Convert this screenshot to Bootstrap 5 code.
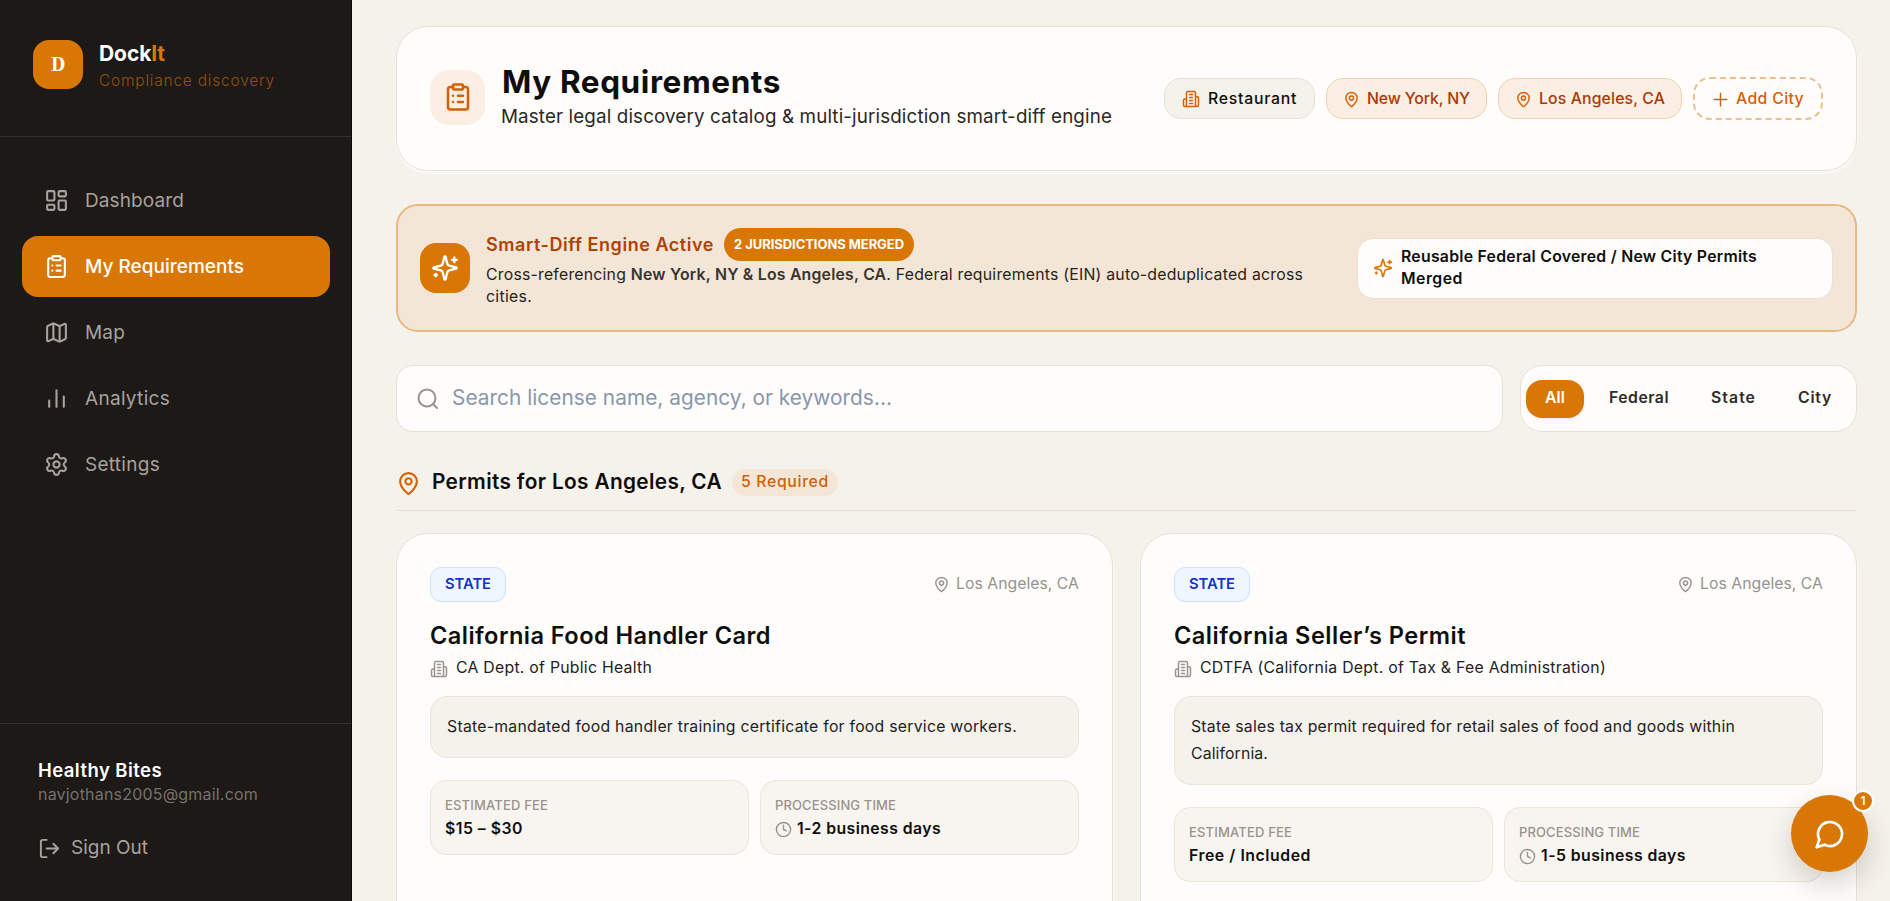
<!DOCTYPE html>
<html lang="en">
<head>
  <meta charset="UTF-8" />
  <meta name="viewport" content="width=device-width, initial-scale=1.0"/>
  <title>DockIt - My Requirements</title>
  <link href="https://cdn.jsdelivr.net/npm/bootstrap@5.3.0/dist/css/bootstrap.min.css" rel="stylesheet"/>
  <style>
    :root {
      --brand: #d97706;
      --brand-deep: #d45f04;
      --rust: #a83a06;
      --ink: #0f0e0d;
      --line: #e8e0d5;
      --paper: #fefdfc;
      --sand: #f5f2eb;
    }
    body { font-family: Inter, "Liberation Sans", sans-serif; background: var(--sand); color: var(--ink); line-height: 1.2; }
    svg { fill: none; stroke: currentColor; stroke-width: 2; stroke-linecap: round; stroke-linejoin: round; flex-shrink: 0; display: block; }
    [data-w] { white-space: nowrap; display: inline-block; }
    .shell { height: 100vh; }

    /* sidebar */
    .side { width: 352px; background: #1c1917; border-right: 1px solid #0c0a09; color: #a8a29e; }
    .brand-row { height: 137px; padding: 40px 0 0 33px; border-bottom: 1px solid #35312e; }
    .logo { width: 50px; height: 49px; border-radius: 16px; background: var(--brand); color: #fff; font-family: "DejaVu Serif Condensed", "DejaVu Serif", serif; font-weight: 700; font-size: 18px; }
    .brand-name { font-size: 21px; font-weight: 700; color: #fff; line-height: 26px; margin-top: 1px; }
    .brand-name b { color: var(--brand); font-weight: 700; }
    .brand-sub { font-size: 15.5px; font-weight: 300; color: #96500f; line-height: 28px; }
    .menu { padding: 33px 21px 0 22px; gap: 5px; }
    .menu a { height: 61px; border-radius: 16px; padding-left: 22px; gap: 16px; color: #a8a29e; font-size: 19px; text-decoration: none; }
    .menu a span { padding-top: 1px; }
    .menu a.on { background: var(--brand); color: #fff; font-weight: 500; }
    .who { height: 178px; border-top: 1px solid #35312e; padding: 33px 0 0 38px; }
    .who-name { font-size: 18.5px; font-weight: 600; color: #fff; line-height: 26px; }
    .who-mail { font-size: 16px; color: #78716c; line-height: 22px; }
    .signout { margin-top: 30px; gap: 10px; font-size: 19px; line-height: 26px; }

    /* main */
    .content { width: 1538px; padding: 26px 33px 0 44px; }
    .panel { background: var(--paper); border: 1px solid var(--line); border-radius: 32px; }
    .soft { box-shadow: 0 2px 3px rgba(255, 255, 255, .75); }
    .page-head { height: 145px; padding: 0 33px; }
    .head-icon { width: 55px; height: 55px; margin-bottom: 3px; border-radius: 19px; background: #fbeee2; color: var(--brand-deep); }
    .page-title { font-size: 31.5px; font-weight: 700; line-height: 36px; margin: 0 0 0 1px; }
    .page-sub { font-size: 18.8px; line-height: 26px; color: #2b2826; margin: 4px 0 3px; }
    .chip { height: 41px; border-radius: 17px; border: 1px solid var(--line); background: var(--sand); font-size: 15.8px; font-weight: 500; padding: 1px 17px 0; gap: 8px; }
    .chip svg { color: var(--brand-deep); }
    .chip-city { background: #fbeee2; border-color: #f2d2ae; color: var(--rust); padding: 1px 16px 0; gap: 7px; }
    .chip-add { height: 43px; background: transparent; border: 2px dashed #ecc08c; color: var(--brand-deep); gap: 7px; }

    .banner { margin-top: 33px; height: 128px; border: 2px solid #e9b985; border-radius: 22px; background: #f3e6d6; padding: 0 22px; }
    .banner-icon { width: 50px; height: 50px; border-radius: 16px; background: var(--brand); color: #fff; }
    .banner-title { font-size: 18px; font-weight: 600; color: #b04205; }
    .tag { height: 33px; border-radius: 17px; background: var(--brand); color: #fff; font-size: 13px; font-weight: 700; padding: 0 10px; }
    .banner-text { font-size: 15.8px; line-height: 22px; color: #262320; margin-top: 3px; }
    .banner-text b { font-weight: 600; color: #38342f; }
    .note { width: 476px; height: 61px; border-radius: 16px; background: var(--paper); border: 1px solid var(--line); font-size: 15.8px; font-weight: 600; line-height: 22px; padding: 0 15px; gap: 8px; }
    .note svg { color: var(--brand); }

    .tools { margin-top: 33px; gap: 17px; }
    .search { height: 67px; border-radius: 17px; padding-left: 19px; gap: 12px; color: #8b96a8; font-size: 20.8px; }
    .search svg { color: #9a938d; }
    .filters { width: 337px; height: 67px; border-radius: 22px; padding: 0 5px; font-size: 15.8px; font-weight: 600; color: #2f2b27; }
    .filters .all-on { height: 38px; width: 58px; border-radius: 16px; background: var(--brand); color: #fff; box-shadow: 0 2px 3px rgba(0, 0, 0, .05); }
    .filter-opts { padding-left: 25px; gap: 42px; }

    .section-head { height: 79px; padding-top: 24px; border-bottom: 1px solid var(--line); }
    .section-head svg { color: var(--brand-deep); }
    .section-title { font-size: 20.8px; font-weight: 600; margin: 0 10px 2px 11px; }
    .count { height: 27px; border-radius: 14px; background: #f3e6d6; color: var(--brand-deep); font-size: 15.8px; font-weight: 500; padding: 0 9px; margin-bottom: 2px; }

    .permits { margin-top: 22px; gap: 27px; }
    .permit { width: 717px; height: 460px; padding: 33px 33px 0; }
    .level { height: 35px; border-radius: 11px; border: 1px solid #cfe3fd; background: #eff6ff; color: #1733c8; font-size: 14.8px; font-weight: 600; padding: 0 14px; }
    .where { color: #99928d; font-size: 15.8px; gap: 6px; }
    .permit-title { font-size: 23.6px; font-weight: 600; line-height: 30px; margin: 19px 0 0; }
    .agency { font-size: 15.8px; line-height: 22px; margin-top: 6px; gap: 8px; color: #24211f; }
    .agency svg { margin-top: 2px; }
    .agency svg, .clock { color: #9a938d; }
    .about { margin-top: 17px; border: 1px solid #ebe5db; border-radius: 17px; background: var(--sand); padding: 16px 16px 17px; font-size: 15.8px; line-height: 27px; color: #24211f; }
    .stats { margin-top: 22px; gap: 11px; }
    .stat { flex: 1; height: 75px; border: 1px solid #ebe5db; border-radius: 16px; background: #f8f5f1; padding: 14px 14px 0; }
    .stat-label { font-size: 13px; font-weight: 500; color: #99928d; line-height: 20px; }
    .stat-value { font-size: 15.8px; font-weight: 600; line-height: 22px; gap: 5px; margin-top: 3px; }

    /* floating chat button */
    .chat { position: absolute; left: 1791px; top: 795px; width: 77px; height: 77px; border-radius: 50%; background: var(--brand); color: #fff; box-shadow: 0 12px 28px rgba(60, 40, 20, .2); }
    .chat-count { position: absolute; left: 61px; top: -5px; width: 22px; height: 22px; border-radius: 50%; border: 2px solid #fff; background: var(--brand); font-size: 12px; font-weight: 600; }
  </style>
</head>
<body>
  <svg class="d-none">
    <symbol id="clipboard" viewBox="0 0 24 24"><rect width="8" height="4" x="8" y="2" rx="1"/><path d="M16 4h2a2 2 0 0 1 2 2v14a2 2 0 0 1-2 2H6a2 2 0 0 1-2-2V6a2 2 0 0 1 2-2h2M12 11h4M12 16h4M8 11h.01M8 16h.01"/></symbol>
    <symbol id="pin" viewBox="0 0 24 24"><path d="M20 10c0 4.993-5.539 10.193-7.399 11.799a1 1 0 0 1-1.202 0C9.539 20.193 4 14.993 4 10a8 8 0 0 1 16 0"/><circle cx="12" cy="10" r="3"/></symbol>
    <symbol id="building" viewBox="0 0 24 24"><path d="M6 22V4a2 2 0 0 1 2-2h8a2 2 0 0 1 2 2v18ZM6 12H4a2 2 0 0 0-2 2v6a2 2 0 0 0 2 2h2M18 9h2a2 2 0 0 1 2 2v9a2 2 0 0 1-2 2h-2M10 6h4M10 10h4M10 14h4M10 18h4"/></symbol>
    <symbol id="sparkles" viewBox="0 0 24 24"><path d="M9.937 15.5A2 2 0 0 0 8.5 14.063l-6.135-1.582a.5.5 0 0 1 0-.962L8.5 9.936A2 2 0 0 0 9.937 8.5l1.582-6.135a.5.5 0 0 1 .963 0L14.063 8.5A2 2 0 0 0 15.5 9.937l6.135 1.581a.5.5 0 0 1 0 .964L15.5 14.063a2 2 0 0 0-1.437 1.437l-1.582 6.135a.5.5 0 0 1-.963 0zM20 3v4M22 5h-4M4 17v2M5 18H3"/></symbol>
    <symbol id="clock" viewBox="0 0 24 24"><circle cx="12" cy="12" r="10"/><path d="M12 6v6l4 2"/></symbol>
  </svg>

  <div class="shell d-flex overflow-hidden position-relative">
    <aside class="side d-flex flex-column flex-shrink-0">
      <div class="brand-row d-flex">
        <div class="logo d-flex align-items-center justify-content-center">D</div>
        <div class="ms-3">
          <div class="brand-name"><span data-w="66">Dock<b>It</b></span></div>
          <div class="brand-sub"><span data-w="176">Compliance discovery</span></div>
        </div>
      </div>
      <nav class="menu d-flex flex-column">
        <a href="#" class="d-flex align-items-center"><svg width="25" height="25" viewBox="0 0 24 24"><rect width="7" height="9" x="3" y="3" rx="1"/><rect width="7" height="5" x="14" y="3" rx="1"/><rect width="7" height="9" x="14" y="12" rx="1"/><rect width="7" height="5" x="3" y="16" rx="1"/></svg><span data-w="99">Dashboard</span></a>
        <a href="#" class="on d-flex align-items-center"><svg width="25" height="25"><use href="#clipboard"/></svg><span data-w="159">My Requirements</span></a>
        <a href="#" class="d-flex align-items-center"><svg width="25" height="25" viewBox="0 0 24 24"><path d="M14.106 5.553a2 2 0 0 0 1.788 0l3.659-1.83A1 1 0 0 1 21 4.619v12.764a1 1 0 0 1-.553.894l-4.553 2.277a2 2 0 0 1-1.788 0l-4.212-2.106a2 2 0 0 0-1.788 0l-3.659 1.83A1 1 0 0 1 3 19.381V6.618a1 1 0 0 1 .553-.894l4.553-2.277a2 2 0 0 1 1.788 0zM15 5.764v15M9 3.236v15"/></svg><span data-w="40">Map</span></a>
        <a href="#" class="d-flex align-items-center"><svg width="25" height="25" viewBox="0 0 24 24"><path d="M5 20v-6M12 20V4M19 20v-10"/></svg><span data-w="85">Analytics</span></a>
        <a href="#" class="d-flex align-items-center"><svg width="25" height="25" viewBox="0 0 24 24"><path d="M9.671 4.136a2.34 2.34 0 0 1 4.659 0 2.34 2.34 0 0 0 3.319 1.915 2.34 2.34 0 0 1 2.33 4.033 2.34 2.34 0 0 0 0 3.831 2.34 2.34 0 0 1-2.33 4.033 2.34 2.34 0 0 0-3.319 1.915 2.34 2.34 0 0 1-4.659 0 2.34 2.34 0 0 0-3.32-1.915 2.34 2.34 0 0 1-2.33-4.033 2.34 2.34 0 0 0 0-3.831A2.34 2.34 0 0 1 6.35 6.051a2.34 2.34 0 0 0 3.319-1.915"/><circle cx="12" cy="12" r="3"/></svg><span data-w="75">Settings</span></a>
      </nav>
      <div class="who mt-auto">
        <div class="who-name"><span data-w="124">Healthy Bites</span></div>
        <div class="who-mail"><span data-w="220">navjothans2005@gmail.com</span></div>
        <div class="signout d-flex align-items-center"><svg width="23" height="23" viewBox="0 0 24 24"><path d="M9 21H5a2 2 0 0 1-2-2V5a2 2 0 0 1 2-2h4M16 17l5-5-5-5M21 12H9"/></svg><span data-w="77">Sign Out</span></div>
      </div>
    </aside>

    <main class="content">
      <header class="page-head panel soft d-flex align-items-center justify-content-between">
        <div class="d-flex align-items-center">
          <div class="head-icon d-flex align-items-center justify-content-center"><svg width="30" height="30"><use href="#clipboard"/></svg></div>
          <div class="ms-3">
            <h1 class="page-title"><span data-w="279">My Requirements</span></h1>
            <div class="page-sub"><span data-w="611">Master legal discovery catalog &amp; multi-jurisdiction smart-diff engine</span></div>
          </div>
        </div>
        <div class="d-flex align-items-center" style="gap: 11px">
          <div class="chip d-flex align-items-center"><svg width="18" height="18"><use href="#building"/></svg><span data-w="89">Restaurant</span></div>
          <div class="chip chip-city d-flex align-items-center"><svg width="17" height="17"><use href="#pin"/></svg><span data-w="103">New York, NY</span></div>
          <div class="chip chip-city d-flex align-items-center"><svg width="17" height="17"><use href="#pin"/></svg><span data-w="126">Los Angeles, CA</span></div>
          <div class="chip chip-add d-flex align-items-center"><svg width="17" height="17" viewBox="0 0 24 24"><path d="M3 12h18M12 3v18"/></svg><span data-w="68">Add City</span></div>
        </div>
      </header>

      <section class="banner d-flex align-items-center justify-content-between">
        <div class="d-flex align-items-center">
          <div class="banner-icon d-flex align-items-center justify-content-center"><svg width="28" height="28"><use href="#sparkles"/></svg></div>
          <div class="ms-3">
            <div class="d-flex align-items-center" style="gap: 10px">
              <span class="banner-title" data-w="228">Smart-Diff Engine Active</span>
              <span class="tag d-flex align-items-center"><span data-w="170">2 JURISDICTIONS MERGED</span></span>
            </div>
            <div class="banner-text"><span data-w="817">Cross-referencing <b>New York, NY &amp; Los Angeles, CA</b>. Federal requirements (EIN) auto-deduplicated across</span><br><span data-w="46">cities.</span></div>
          </div>
        </div>
        <div class="note d-flex align-items-center">
          <svg width="20" height="20"><use href="#sparkles"/></svg>
          <div><span data-w="356">Reusable Federal Covered / New City Permits</span><br><span data-w="62">Merged</span></div>
        </div>
      </section>

      <div class="tools d-flex">
        <div class="search panel flex-grow-1 d-flex align-items-center">
          <svg width="24" height="24" viewBox="0 0 24 24"><circle cx="11" cy="11" r="8.5"/><path d="m21 21-4-4"/></svg>
          <span data-w="440">Search license name, agency, or keywords...</span>
        </div>
        <div class="filters panel d-flex align-items-center">
          <span class="all-on d-flex align-items-center justify-content-center"><span data-w="20">All</span></span>
          <div class="filter-opts d-flex">
            <span data-w="60">Federal</span>
            <span data-w="45">State</span>
            <span data-w="34">City</span>
          </div>
        </div>
      </div>

      <div class="section-head d-flex align-items-center">
        <svg width="25" height="25"><use href="#pin"/></svg>
        <h2 class="section-title"><span data-w="290">Permits for Los Angeles, CA</span></h2>
        <span class="count d-flex align-items-center"><span data-w="88">5 Required</span></span>
      </div>

      <div class="permits d-flex">
        <article class="permit panel soft">
          <div class="d-flex align-items-center justify-content-between">
            <span class="level d-flex align-items-center"><span data-w="46">STATE</span></span>
            <span class="where d-flex align-items-center"><svg width="17" height="17"><use href="#pin"/></svg><span data-w="123">Los Angeles, CA</span></span>
          </div>
          <h3 class="permit-title"><span data-w="341">California Food Handler Card</span></h3>
          <div class="agency d-flex align-items-center"><svg width="18" height="18"><use href="#building"/></svg><span data-w="196">CA Dept. of Public Health</span></div>
          <div class="about"><span data-w="570">State-mandated food handler training certificate for food service workers.</span></div>
          <div class="stats d-flex">
            <div class="stat"><div class="stat-label"><span data-w="103">ESTIMATED FEE</span></div><div class="stat-value"><span data-w="78">$15 – $30</span></div></div>
            <div class="stat"><div class="stat-label"><span data-w="121">PROCESSING TIME</span></div><div class="stat-value d-flex align-items-center"><svg class="clock" width="17" height="17"><use href="#clock"/></svg><span data-w="144">1-2 business days</span></div></div>
          </div>
        </article>
        <article class="permit panel soft">
          <div class="d-flex align-items-center justify-content-between">
            <span class="level d-flex align-items-center"><span data-w="46">STATE</span></span>
            <span class="where d-flex align-items-center"><svg width="17" height="17"><use href="#pin"/></svg><span data-w="123">Los Angeles, CA</span></span>
          </div>
          <h3 class="permit-title"><span data-w="292">California Seller’s Permit</span></h3>
          <div class="agency d-flex align-items-center"><svg width="18" height="18"><use href="#building"/></svg><span data-w="406">CDTFA (California Dept. of Tax &amp; Fee Administration)</span></div>
          <div class="about"><span data-w="544">State sales tax permit required for retail sales of food and goods within</span><br><span data-w="77">California.</span></div>
          <div class="stats d-flex">
            <div class="stat"><div class="stat-label"><span data-w="103">ESTIMATED FEE</span></div><div class="stat-value"><span data-w="122">Free / Included</span></div></div>
            <div class="stat"><div class="stat-label"><span data-w="121">PROCESSING TIME</span></div><div class="stat-value d-flex align-items-center"><svg class="clock" width="17" height="17"><use href="#clock"/></svg><span data-w="145">1-5 business days</span></div></div>
          </div>
        </article>
      </div>
    </main>

    <div class="chat d-flex align-items-center justify-content-center">
      <svg width="32" height="32" viewBox="0 0 24 24"><path d="M7.9 20A9 9 0 1 0 4 16.1L2 22Z"/></svg>
      <span class="chat-count d-flex align-items-center justify-content-center">1</span>
    </div>
  </div>

  <script src="https://cdn.jsdelivr.net/npm/bootstrap@5.3.0/dist/js/bootstrap.bundle.min.js"></script>
  <script>
    // track each label out to its design width
    document.querySelectorAll('[data-w]').forEach((el) => {
      const gap = el.dataset.w - el.getBoundingClientRect().width;
      el.style.letterSpacing = `${gap / el.textContent.length}px`;
    });
  </script>
</body>
</html>
